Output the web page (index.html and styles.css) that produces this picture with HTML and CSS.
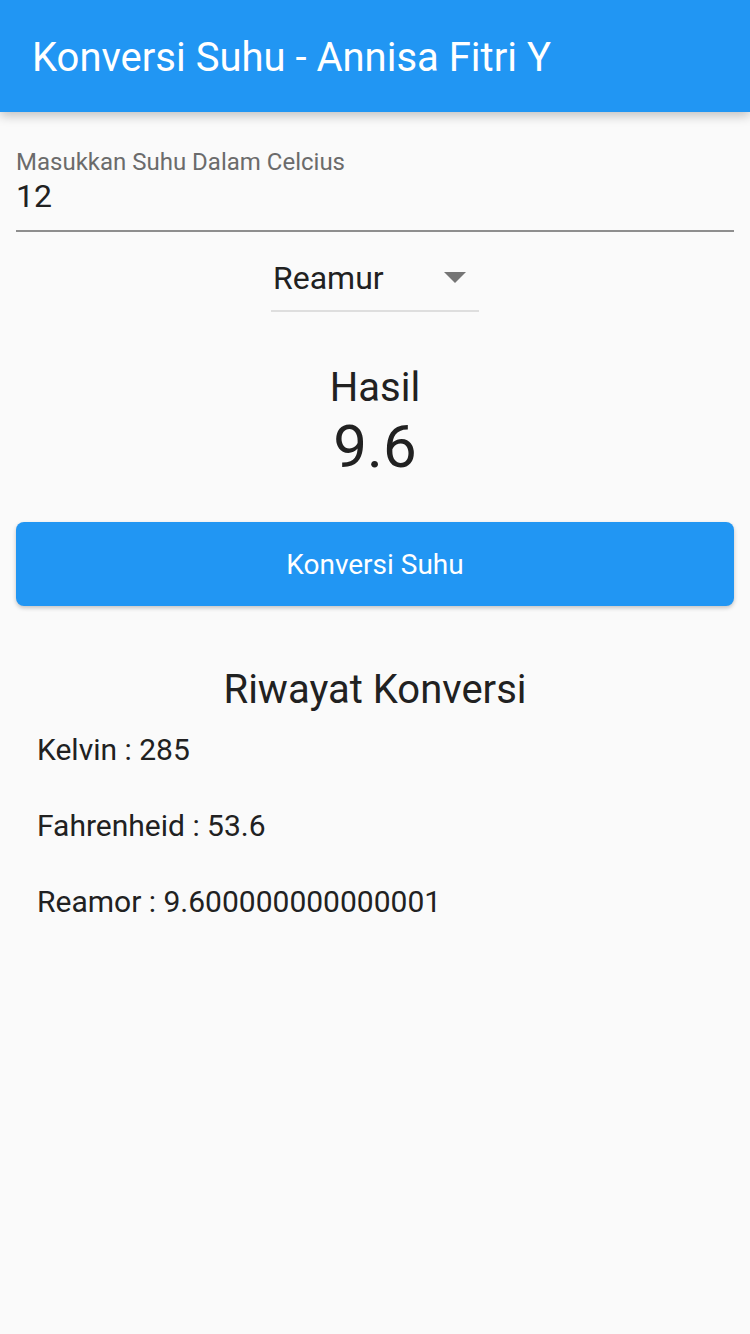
FILE: index.html
```html
<!DOCTYPE html>
<html lang="id">
<head>
<meta charset="utf-8">
<title>Konversi Suhu</title>
<link rel="stylesheet" href="styles.css">
</head>
<body>
<header class="appbar">
  <h1 class="appbar-title">Konversi Suhu - Annisa Fitri Y</h1>
</header>
<main class="content">
  <div class="field">
    <div class="field-label">Masukkan Suhu Dalam Celcius</div>
    <div class="field-value">12</div>
  </div>
  <div class="dropdown-wrap">
    <div class="dropdown">
      <span class="dropdown-text">Reamur</span>
      <svg class="dropdown-arrow" width="22" height="12" viewBox="0 0 22 12"><path d="M0 0 L22 0 L11 11 Z" fill="#757575"/></svg>
    </div>
  </div>
  <div class="result">
    <div class="result-label">Hasil</div>
    <div class="result-value">9.6</div>
  </div>
  <button class="btn">Konversi Suhu</button>
  <h2 class="history-title">Riwayat Konversi</h2>
  <ul class="history">
    <li class="history-item">Kelvin : 285</li>
    <li class="history-item">Fahrenheid : 53.6</li>
    <li class="history-item">Reamor : 9.600000000000001</li>
  </ul>
</main>
</body>
</html>
```
FILE: styles.css
```css
* { box-sizing: border-box; }
html, body {
  margin: 0;
  padding: 0;
  background: #fafafa;
  font-family: Roboto, "Noto Sans", "Liberation Sans", sans-serif;
  color: #212121;
}
.appbar {
  height: 112px;
  background: #2196f3;
  display: flex;
  align-items: center;
  padding-left: 32px;
  padding-top: 3px;
  box-shadow: 0 4px 10px rgba(0,0,0,0.22);
  position: relative;
  z-index: 1;
}
.appbar-title {
  margin: 0;
  font-size: 40px;
  font-weight: 400;
  color: #fff;
  line-height: 48px;
}
.content {
  padding: 0 16px;
}
.field {
  padding-top: 34px;
  border-bottom: 2px solid #8e8e8e;
  padding-bottom: 15px;
}
.field-label {
  font-size: 24px;
  line-height: 32px;
  color: #6b6b6b;
}
.field-value {
  font-size: 32px;
  line-height: 37px;
  color: #212121;
}
.dropdown-wrap {
  display: flex;
  justify-content: center;
  padding-top: 18px;
}
.dropdown {
  width: 208px;
  height: 62px;
  display: flex;
  align-items: center;
  justify-content: space-between;
  padding: 0 13px 0 2px;
  border-bottom: 2px solid #dedede;
}
.dropdown-text {
  font-size: 32px;
  color: #212121;
  padding-bottom: 4px;
}
.dropdown-arrow {
  display: block;
  margin-bottom: 4px;
}
.result {
  text-align: center;
  padding-top: 50px;
}
.result-label {
  font-size: 40px;
  line-height: 52px;
}
.result-value {
  font-size: 60px;
  line-height: 66px;
}
.btn {
  display: block;
  width: 100%;
  height: 84px;
  margin-top: 42px;
  border: none;
  border-radius: 8px;
  background: #2196f3;
  color: #fff;
  font-family: Roboto, "Noto Sans", sans-serif;
  font-size: 28px;
  box-shadow: 0 2px 4px rgba(0,0,0,0.22);
}
.history-title {
  margin: 60px 0 0;
  text-align: center;
  font-size: 40px;
  font-weight: 400;
  line-height: 48px;
}
.history {
  list-style: none;
  margin: -2px 0 0;
  padding: 0 0 0 21px;
}
.history-item {
  font-size: 30px;
  line-height: 76px;
  height: 76px;
}
```
